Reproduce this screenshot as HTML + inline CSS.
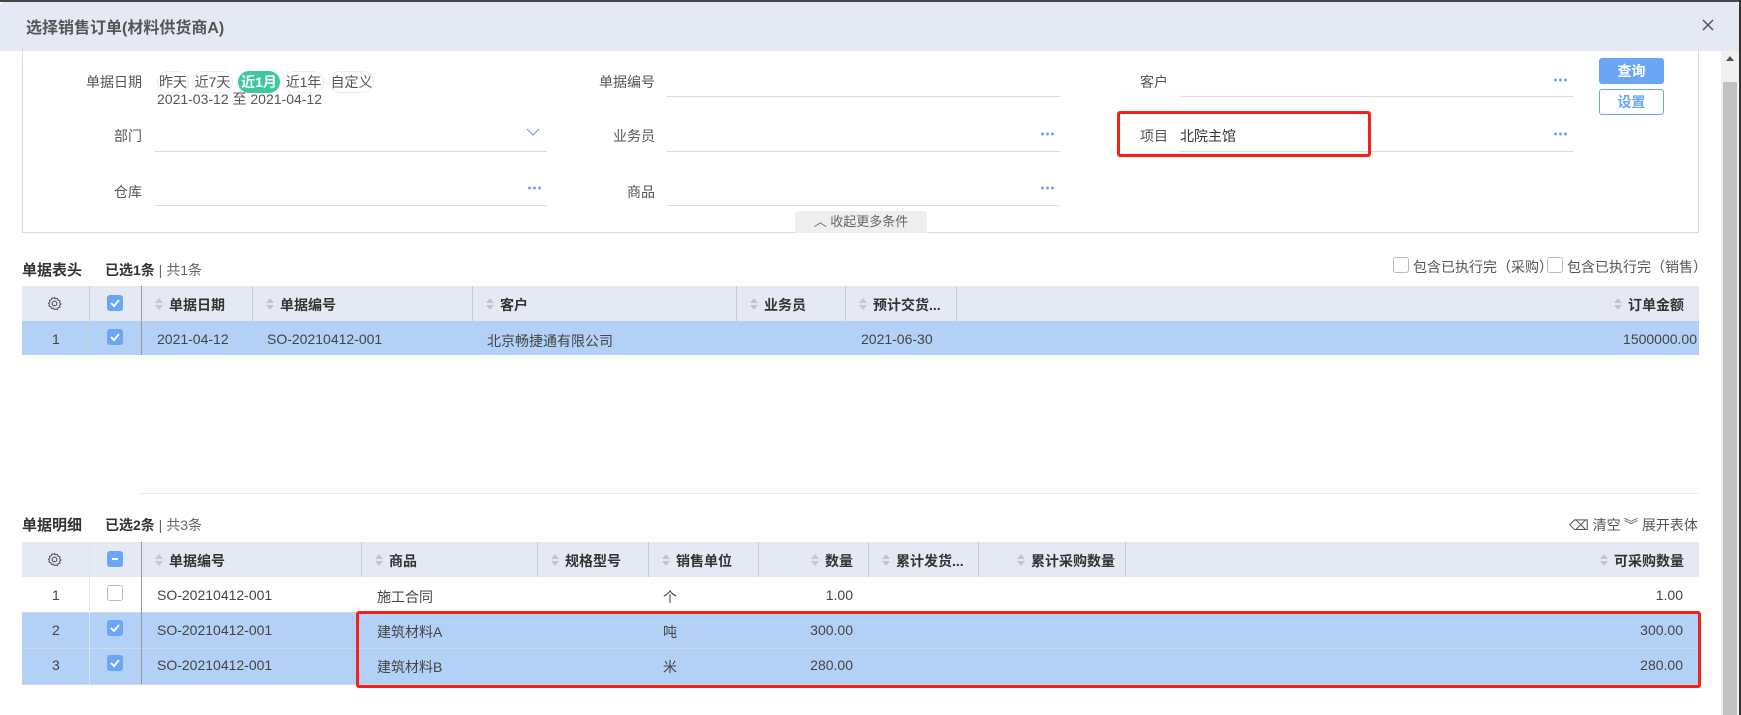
<!DOCTYPE html>
<html><head><meta charset="utf-8"><style>
*{box-sizing:border-box;margin:0;padding:0}
body{width:1741px;height:715px;overflow:hidden;background:#fff;font-family:"Liberation Sans","Noto Sans CJK SC",sans-serif;font-size:14px;color:#444;position:relative}
.a{position:absolute;white-space:nowrap}
.line{position:absolute;height:1px;background:#dcdcdc}
.lbl{position:absolute;text-align:right;color:#555}
.dots{position:absolute;width:14px;height:4px;background:radial-gradient(circle,#6aa6f5 1.3px,transparent 1.6px) 0 0/5px 4px repeat-x}
.pill{position:absolute;top:71px;height:22px;line-height:20px;border:1px solid #dff3ee;border-radius:11px;text-align:center;color:#555;font-size:14px}
.th{position:absolute;background:#e4e9f4;font-weight:bold;color:#333}
.vd{position:absolute;width:1px;background:#c9ccd3}
.cb{position:absolute;width:16px;height:16px;border-radius:3px;background:#6aa6f5}
.cb svg{position:absolute;left:2px;top:2px}
.cbe{position:absolute;width:16px;height:16px;border-radius:3px;border:1px solid #bbb;background:#fff}
.sort{display:inline-block;width:8px;height:14px;vertical-align:-2px;margin-right:6px;position:relative}
.sort:before{content:"";position:absolute;left:0;top:0;border:4px solid transparent;border-bottom:5px solid #c4c4c4;border-top:0}
.sort:after{content:"";position:absolute;left:0;top:7px;border:4px solid transparent;border-top:5px solid #c4c4c4;border-bottom:0}
</style></head><body>
<div class="a" style="left:0;top:0;width:1741px;height:2px;background:#444"></div>
<div class="a" style="left:0;top:2px;width:1739px;height:49px;background:#e4e9f4;border-radius:4px 4px 0 0"></div>
<div class="a" style="left:26px;top:14px;font-size:16px;font-weight:bold;color:#555">选择销售订单(材料供货商A)</div>
<svg class="a" style="left:1702px;top:19px" width="12" height="12"><path d="M1 1L11 11M11 1L1 11" stroke="#555" stroke-width="1.5"/></svg>
<div class="a" style="left:1739px;top:0;width:2px;height:715px;background:#333"></div>
<div class="a" style="left:1721px;top:51px;width:18px;height:664px;background:#f1f1f1"></div>
<div class="a" style="left:1726px;top:56px;border:4px solid transparent;border-bottom:5px solid #505050;border-top:0"></div>
<div class="a" style="left:1723px;top:82px;width:14px;height:633px;background:#c1c1c1"></div>

<div class="a" style="left:22px;top:47px;width:1677px;height:186px;border:1px solid #dcdcdc;border-top:none"></div>
<div class="lbl" style="left:60px;top:72px;width:82px">单据日期</div>
<div class="pill" style="left:157px;width:32px">昨天</div>
<div class="pill" style="left:192px;width:41px">近7天</div>
<div class="pill" style="left:238px;width:42px;background:#3cc9a0;border-color:#3cc9a0;color:#fff;font-weight:bold">近1月</div>
<div class="pill" style="left:283px;width:41px">近1年</div>
<div class="pill" style="left:329px;width:45px">自定义</div>
<div class="a" style="left:157px;top:89px;color:#555">2021-03-12 至 2021-04-12</div>
<div class="lbl" style="left:60px;top:126px;width:82px">部门</div>
<svg class="a" style="left:526px;top:128px" width="14" height="9"><path d="M1 1L7 7L13 1" stroke="#6aa6f5" fill="none" stroke-width="1.2"/></svg>
<div class="line" style="left:155px;top:151px;width:392px"></div>
<div class="lbl" style="left:60px;top:182px;width:82px">仓库</div>
<div class="dots" style="left:527px;top:186px"></div>
<div class="line" style="left:155px;top:205px;width:392px"></div>

<div class="lbl" style="left:560px;top:72px;width:95px">单据编号</div>
<div class="line" style="left:667px;top:96px;width:393px"></div>
<div class="lbl" style="left:560px;top:126px;width:95px">业务员</div>
<div class="dots" style="left:1040px;top:132px"></div>
<div class="line" style="left:667px;top:151px;width:393px"></div>
<div class="lbl" style="left:560px;top:182px;width:95px">商品</div>
<div class="dots" style="left:1040px;top:186px"></div>
<div class="line" style="left:667px;top:205px;width:393px"></div>

<div class="lbl" style="left:1080px;top:72px;width:88px">客户</div>
<div class="dots" style="left:1553px;top:78px"></div>
<div class="line" style="left:1180px;top:96px;width:393px"></div>
<div class="lbl" style="left:1080px;top:126px;width:88px">项目</div>
<div class="a" style="left:1180px;top:126px;color:#333">北院主馆</div>
<div class="dots" style="left:1553px;top:132px"></div>
<div class="line" style="left:1180px;top:151px;width:393px"></div>
<div class="a" style="left:1117px;top:111px;width:254px;height:46px;border:3px solid #f5201a;border-radius:3px"></div>

<div class="a" style="left:1599px;top:58px;width:65px;height:26px;background:#6aa6f5;border-radius:3px;color:#fff;text-align:center;line-height:26px;font-weight:bold">查询</div>
<div class="a" style="left:1599px;top:89px;width:65px;height:26px;border:1px solid #6aa6f5;border-radius:3px;color:#6aa6f5;text-align:center;line-height:24px;font-weight:bold">设置</div>
<div class="a" style="left:795px;top:211px;width:132px;height:22px;background:#eee;border-radius:4px 4px 0 0;color:#666;font-size:13px;line-height:22px;text-align:center">︿ 收起更多条件</div>

<div class="a" style="left:22px;top:259px;font-weight:bold;color:#333;font-size:15px">单据表头</div>
<div class="a" style="left:105px;top:260px;color:#666"><b style="color:#333">已选1条</b> | 共1条</div>
<div class="cbe" style="left:1393px;top:257px"></div><div class="a" style="left:1413px;top:257px;color:#555">包含已执行完（采购）</div>
<div class="cbe" style="left:1547px;top:257px"></div><div class="a" style="left:1567px;top:257px;color:#555">包含已执行完（销售）</div>
<div class="th" style="left:22px;top:286px;width:1677px;height:35px"></div>
<div class="a" style="left:22px;top:321px;width:1677px;height:34px;background:#b3d1f6"></div>
<svg class="a" style="left:47px;top:296px" width="15" height="15" viewBox="0 0 16 16"><circle cx="8" cy="8" r="2.5" fill="none" stroke="#555" stroke-width="1.2"/><path d="M8 1.5l1.3 1.6 2-.5.6 2 2 .6-.5 2 1.6 1.3-1.6 1.3.5 2-2 .6-.6 2-2-.5L8 14.5l-1.3-1.6-2 .5-.6-2-2-.6.5-2L1.5 8l1.6-1.3-.5-2 2-.6.6-2 2 .5z" fill="none" stroke="#555" stroke-width="1.1"/></svg>
<div class="vd" style="left:89px;top:286px;height:69px"></div><div class="vd" style="left:141px;top:286px;height:69px;background:#999"></div>
<div class="vd" style="left:252px;top:286px;height:35px"></div><div class="vd" style="left:472px;top:286px;height:35px"></div><div class="vd" style="left:736px;top:286px;height:35px"></div><div class="vd" style="left:845px;top:286px;height:35px"></div><div class="vd" style="left:956px;top:286px;height:35px"></div>
<div class="cb" style="left:107px;top:295px"><svg width="12" height="12"><path d="M2 6l3 3 5-6" stroke="#fff" stroke-width="1.8" fill="none"/></svg></div>
<div class="cb" style="left:107px;top:329px"><svg width="12" height="12"><path d="M2 6l3 3 5-6" stroke="#fff" stroke-width="1.8" fill="none"/></svg></div>
<div class="a" style="left:155px;top:295px;font-weight:bold;color:#333"><span class="sort"></span>单据日期</div>
<div class="a" style="left:266px;top:295px;font-weight:bold;color:#333"><span class="sort"></span>单据编号</div>
<div class="a" style="left:486px;top:295px;font-weight:bold;color:#333"><span class="sort"></span>客户</div>
<div class="a" style="left:750px;top:295px;font-weight:bold;color:#333"><span class="sort"></span>业务员</div>
<div class="a" style="left:859px;top:295px;font-weight:bold;color:#333"><span class="sort"></span>预计交货...</div>
<div class="a" style="right:57px;top:295px;font-weight:bold;color:#333"><span class="sort"></span>订单金额</div>
<div class="a" style="left:52px;top:331px">1</div>
<div class="a" style="left:157px;top:331px">2021-04-12</div>
<div class="a" style="left:267px;top:331px">SO-20210412-001</div>
<div class="a" style="left:487px;top:331px">北京畅捷通有限公司</div>
<div class="a" style="left:861px;top:331px">2021-06-30</div>
<div class="a" style="right:44px;top:331px">1500000.00</div>

<div class="line" style="left:138px;top:493px;width:1561px;background:#ececec"></div>

<div class="a" style="left:22px;top:514px;font-weight:bold;color:#333;font-size:15px">单据明细</div>
<div class="a" style="left:105px;top:515px;color:#666"><b style="color:#333">已选2条</b> | 共3条</div>
<div class="a" style="left:1569px;top:515px;color:#555">⌫ 清空</div>
<div class="a" style="left:1624px;top:515px;color:#555">︾ 展开表体</div>
<div class="th" style="left:22px;top:542px;width:1677px;height:35px"></div>
<div class="a" style="left:22px;top:612px;width:1677px;height:72px;background:#b3d1f6"></div>
<div class="line" style="left:22px;top:612px;width:1677px;background:#d0d8e4"></div>
<div class="line" style="left:22px;top:648px;width:1677px;background:#d0d8e4"></div>
<div class="line" style="left:22px;top:684px;width:1677px;background:#d0d8e4"></div>
<svg class="a" style="left:47px;top:552px" width="15" height="15" viewBox="0 0 16 16"><circle cx="8" cy="8" r="2.5" fill="none" stroke="#555" stroke-width="1.2"/><path d="M8 1.5l1.3 1.6 2-.5.6 2 2 .6-.5 2 1.6 1.3-1.6 1.3.5 2-2 .6-.6 2-2-.5L8 14.5l-1.3-1.6-2 .5-.6-2-2-.6.5-2L1.5 8l1.6-1.3-.5-2 2-.6.6-2 2 .5z" fill="none" stroke="#555" stroke-width="1.1"/></svg>
<div class="vd" style="left:89px;top:542px;height:142px;background:#e0e4ea"></div><div class="vd" style="left:141px;top:542px;height:142px;background:#999"></div>
<div class="vd" style="left:361px;top:542px;height:35px"></div><div class="vd" style="left:537px;top:542px;height:35px"></div><div class="vd" style="left:648px;top:542px;height:35px"></div><div class="vd" style="left:758px;top:542px;height:35px"></div><div class="vd" style="left:868px;top:542px;height:35px"></div><div class="vd" style="left:978px;top:542px;height:35px"></div><div class="vd" style="left:1125px;top:542px;height:35px"></div>
<div class="cb" style="left:107px;top:551px"><svg width="12" height="12"><path d="M3 6h6" stroke="#fff" stroke-width="2"/></svg></div>
<div class="cbe" style="left:107px;top:585px"></div>
<div class="cb" style="left:107px;top:620px"><svg width="12" height="12"><path d="M2 6l3 3 5-6" stroke="#fff" stroke-width="1.8" fill="none"/></svg></div>
<div class="cb" style="left:107px;top:655px"><svg width="12" height="12"><path d="M2 6l3 3 5-6" stroke="#fff" stroke-width="1.8" fill="none"/></svg></div>
<div class="a" style="left:155px;top:551px;font-weight:bold;color:#333"><span class="sort"></span>单据编号</div>
<div class="a" style="left:375px;top:551px;font-weight:bold;color:#333"><span class="sort"></span>商品</div>
<div class="a" style="left:551px;top:551px;font-weight:bold;color:#333"><span class="sort"></span>规格型号</div>
<div class="a" style="left:662px;top:551px;font-weight:bold;color:#333"><span class="sort"></span>销售单位</div>
<div class="a" style="right:888px;top:551px;font-weight:bold;color:#333"><span class="sort"></span>数量</div>
<div class="a" style="left:882px;top:551px;font-weight:bold;color:#333"><span class="sort"></span>累计发货...</div>
<div class="a" style="left:1017px;top:551px;font-weight:bold;color:#333"><span class="sort"></span>累计采购数量</div>
<div class="a" style="right:57px;top:551px;font-weight:bold;color:#333"><span class="sort"></span>可采购数量</div>

<div class="a" style="left:52px;top:587px">1</div><div class="a" style="left:157px;top:587px">SO-20210412-001</div><div class="a" style="left:377px;top:587px">施工合同</div><div class="a" style="left:663px;top:587px">个</div><div class="a" style="right:888px;top:587px">1.00</div><div class="a" style="right:58px;top:587px">1.00</div>
<div class="a" style="left:52px;top:622px">2</div><div class="a" style="left:157px;top:622px">SO-20210412-001</div><div class="a" style="left:377px;top:622px">建筑材料A</div><div class="a" style="left:663px;top:622px">吨</div><div class="a" style="right:888px;top:622px">300.00</div><div class="a" style="right:58px;top:622px">300.00</div>
<div class="a" style="left:52px;top:657px">3</div><div class="a" style="left:157px;top:657px">SO-20210412-001</div><div class="a" style="left:377px;top:657px">建筑材料B</div><div class="a" style="left:663px;top:657px">米</div><div class="a" style="right:888px;top:657px">280.00</div><div class="a" style="right:58px;top:657px">280.00</div>
<div class="a" style="left:356px;top:611px;width:1345px;height:77px;border:3px solid #f5201a;border-radius:3px"></div>
</body></html>
